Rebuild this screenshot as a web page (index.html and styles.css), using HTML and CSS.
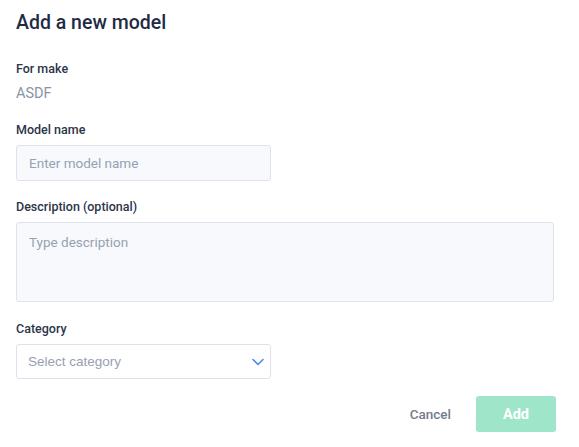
FILE: index.html
```html
<!DOCTYPE html>
<html lang="en">
<head>
  <meta charset="UTF-8">
  <title>Add a new model</title>
  <link rel="stylesheet" href="styles.css">
</head>
<body>
<div class="modal">
  <h2 class="title">Add a new model</h2>

  <div class="field">
    <div class="label">For make</div>
    <div class="value">ASDF</div>
  </div>

  <div class="field">
    <label class="label" for="modelName">Model name</label>
    <input class="input short" id="modelName" type="text" placeholder="Enter model name">
  </div>

  <div class="field tight">
    <label class="label" for="description">Description (optional)</label>
    <textarea class="input area" id="description" placeholder="Type description"></textarea>
  </div>

  <div class="field">
    <label class="label" for="category">Category</label>
    <div class="select short">
      <span class="select-text">Select category</span>
      <svg class="chevron" width="12" height="8" viewBox="0 0 12 8">
        <path d="M1 1.5 L6 6.5 L11 1.5" fill="none" stroke="#4a8ef0" stroke-width="1.6" stroke-linecap="round" stroke-linejoin="round"/>
      </svg>
    </div>
  </div>

  <div class="actions">
    <button class="btn-cancel">Cancel</button>
    <button class="btn-add" disabled>Add</button>
  </div>
</div>
</body>
</html>
```

FILE: styles.css
```css
body {
  margin: 0;
  font-family: Roboto, "Noto Sans", sans-serif;
  background: #fff;
  color: #27324a;
}
.modal {
  width: 538px;
  padding: 11px 16px 0;
}
.title {
  margin: 0;
  font-size: 19.5px;
  font-weight: 500;
  line-height: 24px;
  color: #1f2b45;
}
.field {
  margin-top: 19px;
}
.field:first-of-type {
  margin-top: 26px;
}
.field.tight {
  margin-top: 18px;
}
.label {
  display: block;
  font-size: 12.5px;
  font-weight: 500;
  line-height: 16px;
  color: #2c3549;
  margin-bottom: 7px;
}
.value {
  font-size: 14.5px;
  color: #8a93a5;
  line-height: 18px;
  margin-top: 8px;
}
.input {
  display: block;
  box-sizing: border-box;
  font-family: Roboto, "Noto Sans", sans-serif;
  font-size: 13.5px;
  color: #27324a;
  background: #f7f9fc;
  border: 1px solid #dde2ec;
  border-radius: 3px;
  padding: 0 12px;
  outline: none;
}
.input::placeholder {
  color: #98a1b2;
}
.short {
  width: 255px;
}
input.input {
  height: 36px;
}
.area {
  width: 538px;
  height: 80px;
  padding-top: 11px;
  resize: none;
}
.select {
  box-sizing: border-box;
  height: 35px;
  display: flex;
  align-items: center;
  justify-content: space-between;
  border: 1px solid #dde2ec;
  border-radius: 3px;
  padding: 0 6px 0 11px;
  background: #fff;
}
.select-text {
  font-family: "Liberation Sans", Arial, sans-serif;
  font-size: 13.5px;
  color: #98a1b2;
}
.actions {
  display: flex;
  justify-content: flex-end;
  align-items: center;
  gap: 25px;
  margin-top: 17px;
  margin-right: -2px;
}
.btn-cancel {
  border: none;
  background: none;
  font-family: Roboto, sans-serif;
  font-size: 13.5px;
  font-weight: 500;
  color: #737c8f;
  padding: 0;
}
.btn-add {
  width: 80px;
  height: 36px;
  border: none;
  border-radius: 3px;
  background: #9ee5c9;
  color: #fff;
  font-family: Roboto, sans-serif;
  font-size: 14.5px;
  font-weight: 700;
}
```
